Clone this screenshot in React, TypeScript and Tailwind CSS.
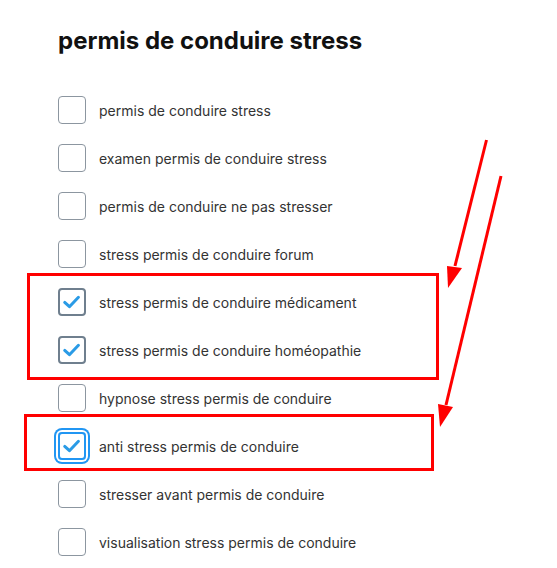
import React from 'react'

const items = [
  { label: 'permis de conduire stress', state: 'off' },
  { label: 'examen permis de conduire stress', state: 'off' },
  { label: 'permis de conduire ne pas stresser', state: 'off' },
  { label: 'stress permis de conduire forum', state: 'off' },
  { label: 'stress permis de conduire médicament', state: 'on' },
  { label: 'stress permis de conduire homéopathie', state: 'on' },
  { label: 'hypnose stress permis de conduire', state: 'off' },
  { label: 'anti stress permis de conduire', state: 'focus' },
  { label: 'stresser avant permis de conduire', state: 'off' },
  { label: 'visualisation stress permis de conduire', state: 'off' },
]

function Check() {
  return (
    <svg viewBox="0 0 28 28" className="h-full w-full">
      <path d="M5.5 14.5 L11 19.5 L21.5 8.5" fill="none" stroke="#2a9be6" strokeWidth="3.5" strokeLinecap="round" strokeLinejoin="round" />
    </svg>
  )
}

function Box({ state }: { state: string }) {
  if (state === 'focus') {
    return (
      <div className="h-7 w-7 shrink-0 rounded-[4px] border-2 border-[#2196f3] ring-2 ring-[#2196f3] ring-offset-2 ring-offset-white">
        <Check />
      </div>
    )
  }
  if (state === 'on') {
    return (
      <div className="h-7 w-7 shrink-0 rounded-[4px] border-2 border-[#6f7f8e]">
        <Check />
      </div>
    )
  }
  return <div className="h-7 w-7 shrink-0 rounded-[4px] border border-[#8c96a0]" />
}

export default function App() {
  return (
    <div className="relative h-[568px] w-[557px] overflow-hidden bg-white" style={{ fontFamily: 'Inter, "Liberation Sans", sans-serif' }}>
      <div className="pl-[58px] pt-[25px]">
        <h2 className="text-[24px] font-bold leading-8 text-[#111]">permis de conduire stress</h2>
        <ul className="mt-[29px]">
          {items.map((item) => (
            <li key={item.label} className="flex h-12 items-center gap-[13px]">
              <Box state={item.state} />
              <span className="text-[14px] text-[#333]">{item.label}</span>
            </li>
          ))}
        </ul>
      </div>

      {/* annotations */}
      <div className="absolute left-[27px] top-[273px] h-[107px] w-[412px] border-[3px] border-[#ff0000]" />
      <div className="absolute left-[24px] top-[414px] h-[57px] w-[410px] border-[3px] border-[#ff0000]" />
      <svg className="absolute inset-0" width="557" height="568" viewBox="0 0 557 568">
        <line x1="486.5" y1="140" x2="455" y2="266" stroke="#ff0000" strokeWidth="3" />
        <polygon points="447,266 462,268 448,288" fill="#ff0000" />
        <line x1="501" y1="176" x2="446" y2="405" stroke="#ff0000" strokeWidth="3" />
        <polygon points="438,404 453,407 440,427" fill="#ff0000" />
      </svg>
    </div>
  )
}
